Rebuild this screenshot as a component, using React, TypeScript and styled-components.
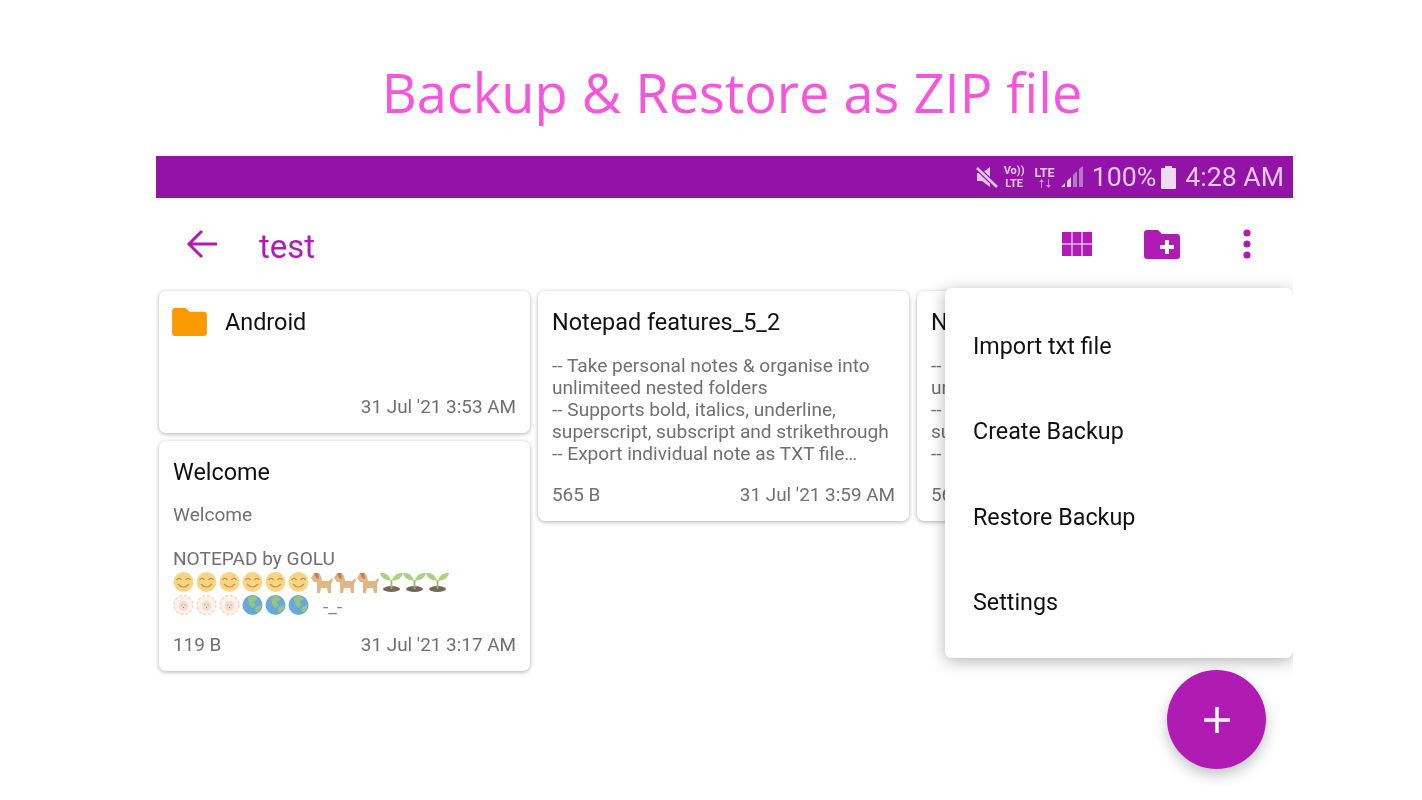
import styled, { createGlobalStyle } from 'styled-components'
import type { ReactNode } from 'react'

const GlobalStyle = createGlobalStyle`
  html, body {
    margin: 0;
    padding: 0;
    background: #fff;
    overflow: hidden;
  }
  * {
    box-sizing: border-box;
  }
`

const Page = styled.div`
  width: 1422px;
  height: 800px;
  overflow: hidden;
  font-family: Roboto, "Liberation Sans", sans-serif;
  background: #fff;
  filter: blur(0.35px);
`

const Headline = styled.h1`
  height: 156px;
  margin: 0;
  padding: 54px 0 0 42px;
  text-align: center;
  font-family: "Open Sans", "Noto Sans", sans-serif;
  font-size: 54.2px;
  line-height: 76px;
  font-weight: 400;
  color: #f557dc;
  white-space: nowrap;
`

const Screen = styled.div`
  position: relative;
  width: 1137px;
  height: 644px;
  margin-left: 156px;
  overflow: hidden;
  background: #fff;
`

const StatusBar = styled.div`
  height: 42px;
  display: flex;
  align-items: center;
  justify-content: flex-end;
  padding-right: 9px;
  background: #9413a7;
  color: #e6c8ec;
`

const StatusText = styled.span<{ $gap?: number }>`
  font-size: 26.7px;
  line-height: 42px;
  margin-left: ${props => props.$gap ?? 0}px;
  white-space: nowrap;
`

const NetLabel = styled.span<{ $gap: number; $size: number }>`
  display: flex;
  flex-direction: column;
  align-items: center;
  font-size: ${props => props.$size}px;
  line-height: 13px;
  font-weight: 700;
  margin-left: ${props => props.$gap}px;
`

const Toolbar = styled.div`
  height: 92px;
  display: flex;
  align-items: center;
  color: #b01cb3;
`

const BackButton = styled.div`
  width: 40px;
  height: 40px;
  margin-left: 26px;
  margin-top: -1px;
  display: flex;
  align-items: center;
  justify-content: center;
`

const Title = styled.div`
  margin-left: 37px;
  flex: 1;
  font-size: 33px;
  line-height: 40px;
  margin-top: 5px;
`

const ToolIcons = styled.div`
  display: flex;
  align-items: center;
  padding-right: 41px;
`

const ToolIcon = styled.div<{ $width: number; $gap?: number }>`
  width: ${props => props.$width}px;
  height: 36px;
  margin-left: ${props => props.$gap ?? 0}px;
  display: flex;
  align-items: center;
  justify-content: center;
`

const Board = styled.div`
  display: flex;
  gap: 8px;
  padding: 1px 0 0 3px;
`

const Column = styled.div`
  width: 371px;
  flex-shrink: 0;
  display: flex;
  flex-direction: column;
  gap: 8px;
`

const Card = styled.div<{ $height: number }>`
  height: ${props => props.$height}px;
  padding: 0 14px 0 14px;
  display: flex;
  flex-direction: column;
  background: #fff;
  border-radius: 7px;
  overflow: hidden;
  white-space: nowrap;
  box-shadow: 0 1px 4px rgba(0, 0, 0, 0.32);
`

const FolderHead = styled.div`
  display: flex;
  align-items: center;
  gap: 18px;
  height: 61px;
  margin-left: -1px;
  color: #111;
  font-size: 23.4px;
`

const CardTitle = styled.div`
  font-size: 23.4px;
  line-height: 28px;
  color: #111;
  padding-top: 17px;
`

const Body = styled.div<{ $top: number }>`
  margin-top: ${props => props.$top}px;
  font-size: 19.1px;
  line-height: 22px;
  color: #707070;
`

const Footer = styled.div<{ $bottom: number }>`
  margin-top: auto;
  padding-bottom: ${props => props.$bottom}px;
  display: flex;
  justify-content: space-between;
  font-size: 18.9px;
  line-height: 24px;
  color: #707070;
`

const EmojiRow = styled.div`
  display: flex;
  align-items: center;
  height: 23px;
  opacity: 0.85;
`

const EmojiCell = styled.span`
  display: flex;
`

const Kaomoji = styled.span`
  margin-left: 12px;
  margin-top: 4px;
`

const Menu = styled.div`
  position: absolute;
  top: 132px;
  right: 0;
  width: 348px;
  height: 370px;
  padding-top: 15.5px;
  background: #fff;
  border-radius: 7px;
  box-shadow: 0 3px 16px rgba(0, 0, 0, 0.3);
`

const MenuItem = styled.div`
  height: 85.3px;
  padding-left: 28px;
  display: flex;
  align-items: center;
  font-size: 23.3px;
  color: #111;
`

const Fab = styled.div`
  position: absolute;
  left: 1011px;
  top: 514px;
  width: 99px;
  height: 99px;
  border-radius: 50%;
  background: #b01cb3;
  display: flex;
  align-items: center;
  justify-content: center;
  box-shadow: 0 6px 14px rgba(0, 0, 0, 0.24);
`

const Smile = () => (
  <svg width="23" height="22" viewBox="0 0 23 22">
    <circle cx="10.5" cy="11" r="10" fill="#f8cd6c" />
    <path d="M3.5 9q2.500-3.500 5 0M12.500 9q2.500-3.500 5 0" stroke="#a9793a" strokeWidth="1.2" fill="none" />
    <path d="M5 13q5.500 6 11 0" stroke="#b5803c" strokeWidth="1.2" fill="none" />
  </svg>
)

const Dog = () => (
  <svg width="23" height="22" viewBox="0 0 23 22">
    <path d="M0 7l3-5h5l2 3 1 5h7l3-3 1 2-2 4v9h-3l-1-5h-6l-1 5H6V11H3z" fill="#dcaa72" />
    <path d="M3 2h4l1 6-3-1z" fill="#a8703c" />
  </svg>
)

const Sprout = () => (
  <svg width="23" height="22" viewBox="0 0 23 22">
    <ellipse cx="11.500" cy="18" rx="8.500" ry="3" fill="#5f4c3a" />
    <path d="M11.500 18V9" stroke="#7fae55" strokeWidth="1.800" />
    <path d="M11 9.500C9 3 5 1.500 0 2c1 5 5 7.500 11 7.500zM12 9.500C14 3 18 1.500 23 2c-1 5-5 7.500-11 7.500z" fill="#9ccb6b" />
  </svg>
)

const Sheep = () => (
  <svg width="23" height="22" viewBox="0 0 23 22">
    <circle cx="10.500" cy="11" r="10" fill="#f9f1e8" />
    <circle cx="10.500" cy="11" r="9.500" fill="none" stroke="#e8d8c6" strokeWidth="1.500" strokeDasharray="3 2" />
    <ellipse cx="10.500" cy="12" rx="4.500" ry="5" fill="#f1d6bf" />
    <path d="M8.500 11h.8M11.700 11h.8M10.500 13v1" stroke="#8a6a50" strokeWidth="1" />
  </svg>
)

const Globe = () => (
  <svg width="23" height="22" viewBox="0 0 23 22">
    <circle cx="10.500" cy="11" r="10" fill="#4f9bd4" />
    <path d="M6 4l6-3 4 4-5 3 3 3-4 3-3-4zM14 13l5-2 0 4-4 4-2-3z" fill="#86b86e" />
  </svg>
)

const repeat = (count: number, node: ReactNode) =>
  Array.from({ length: count }, (_, i) => <EmojiCell key={i}>{node}</EmojiCell>)

export default function App() {
  return (
    <Page>
      <GlobalStyle />
      <Headline>Backup &amp; Restore as ZIP file</Headline>
      <Screen>
        <StatusBar>
          {/* muted speaker */}
          <svg width="22" height="22" viewBox="0 0 22 22">
            <path d="M1 7h5l8-6v20l-8-6H1z" fill="#e6c8ec" />
            <path d="M1 2l20 19" stroke="#9413a7" strokeWidth="5" />
            <path d="M1 2l20 19" stroke="#e6c8ec" strokeWidth="2.500" />
          </svg>
          <NetLabel $gap={6} $size={11}>
            <span>Vo))</span>
            <span>LTE</span>
          </NetLabel>
          <NetLabel $gap={10} $size={12.5}>
            <span>LTE</span>
            <svg width="20" height="9" viewBox="0 0 20 9">
              <path d="M6 9V3H4l2.500-3L9 3H7v6zM13 0v6h-2l2.500 3L16 6h-2V0z" fill="#c38ccb" />
            </svg>
          </NetLabel>
          <svg width="24" height="24" viewBox="0 0 24 24" style={{ marginLeft: 5 }}>
            <path d="M1 22h4v-4zM7 22h4V12l-4 4z" fill="#e6c8ec" />
            <path d="M13 22h4V6l-4 4zM19 22h4V1l-4 3z" fill="#b877c4" />
          </svg>
          <StatusText $gap={8}>100%</StatusText>
          <svg width="17" height="24" viewBox="0 0 17 24" style={{ marginLeft: 4 }}>
            <path d="M5 1h7v2h3a1 1 0 0 1 1 1v19a1 1 0 0 1-1 1H2a1 1 0 0 1-1-1V4a1 1 0 0 1 1-1h3z" fill="#efdcf3" />
          </svg>
          <StatusText $gap={8}>4:28 AM</StatusText>
        </StatusBar>
        <Toolbar>
          <BackButton>
            <svg width="32" height="32" viewBox="0 0 32 32" fill="none" stroke="#b01cb3" strokeWidth="3">
              <path d="M31 16H4M16 3L3 16l13 13" />
            </svg>
          </BackButton>
          <Title>test</Title>
          <ToolIcons>
            <ToolIcon $width={30}>
              <svg width="30" height="24" viewBox="0 0 30 24" fill="#b01cb3">
                <path d="M0 0h9.500v11.500H0zM10.500 0h9v11.500h-9zM20.500 0H30v11.500h-9.500zM0 12.500h9.500V24H0zM10.500 12.500h9V24h-9zM20.500 12.500H30V24h-9.500z" />
              </svg>
            </ToolIcon>
            <ToolIcon $width={36} $gap={52}>
              <svg width="36" height="29" viewBox="0 0 36 29">
                <path d="M3 0h11l4 4h15a3 3 0 0 1 3 3v19a3 3 0 0 1-3 3H3a3 3 0 0 1-3-3V3a3 3 0 0 1 3-3z" fill="#b01cb3" />
                <path d="M21 10h4v5h5v4h-5v5h-4v-5h-5v-4h5z" fill="#fff" />
              </svg>
            </ToolIcon>
            <ToolIcon $width={10} $gap={62}>
              <svg width="10" height="30" viewBox="0 0 10 30" fill="#b01cb3">
                <circle cx="5" cy="4" r="3.600" />
                <circle cx="5" cy="15" r="3.600" />
                <circle cx="5" cy="26" r="3.600" />
              </svg>
            </ToolIcon>
          </ToolIcons>
        </Toolbar>
        <Board>
          <Column>
            <Card $height={142}>
              <FolderHead>
                <svg width="35" height="28" viewBox="0 0 36 29">
                  <path d="M3 0h11l4 4h15a3 3 0 0 1 3 3v19a3 3 0 0 1-3 3H3a3 3 0 0 1-3-3V3a3 3 0 0 1 3-3z" fill="#f89a00" />
                </svg>
                Android
              </FolderHead>
              <Footer $bottom={14}>
                <span />
                <span>31 Jul '21 3:53 AM</span>
              </Footer>
            </Card>
            <Card $height={230}>
              <CardTitle>Welcome</CardTitle>
              <Body $top={18}>Welcome</Body>
              <Body $top={22}>
                NOTEPAD by GOLU
                <EmojiRow>
                  {repeat(6, <Smile />)}
                  {repeat(3, <Dog />)}
                  {repeat(3, <Sprout />)}
                </EmojiRow>
                <EmojiRow>
                  {repeat(3, <Sheep />)}
                  {repeat(3, <Globe />)}
                  <Kaomoji>-_-</Kaomoji>
                </EmojiRow>
              </Body>
              <Footer $bottom={14}>
                <span>119 B</span>
                <span>31 Jul '21 3:17 AM</span>
              </Footer>
            </Card>
          </Column>
          <Column>
            <Card $height={230}>
              <CardTitle>Notepad features_5_2</CardTitle>
              <Body $top={19}>
                -- Take personal notes &amp; organise into
                <br />
                unlimiteed nested folders
                <br />
                -- Supports bold, italics, underline,
                <br />
                superscript, subscript and strikethrough
                <br />
                -- Export individual note as TXT file…
              </Body>
              <Footer $bottom={14}>
                <span>565 B</span>
                <span>31 Jul '21 3:59 AM</span>
              </Footer>
            </Card>
          </Column>
          {/* only the left edge of this card shows past the menu */}
          <Column>
            <Card $height={230}>
              <CardTitle>N</CardTitle>
              <Body $top={19}>
                --
                <br />
                un
                <br />
                --
                <br />
                su
                <br />
                --
              </Body>
              <Footer $bottom={14}>
                <span>56</span>
              </Footer>
            </Card>
          </Column>
        </Board>
        <Menu>
          <MenuItem>Import txt file</MenuItem>
          <MenuItem>Create Backup</MenuItem>
          <MenuItem>Restore Backup</MenuItem>
          <MenuItem>Settings</MenuItem>
        </Menu>
        <Fab>
          <svg width="26" height="26" viewBox="0 0 26 26" stroke="#fff" strokeWidth="3.400">
            <path d="M13 0v26M0 13h26" />
          </svg>
        </Fab>
      </Screen>
    </Page>
  )
}
